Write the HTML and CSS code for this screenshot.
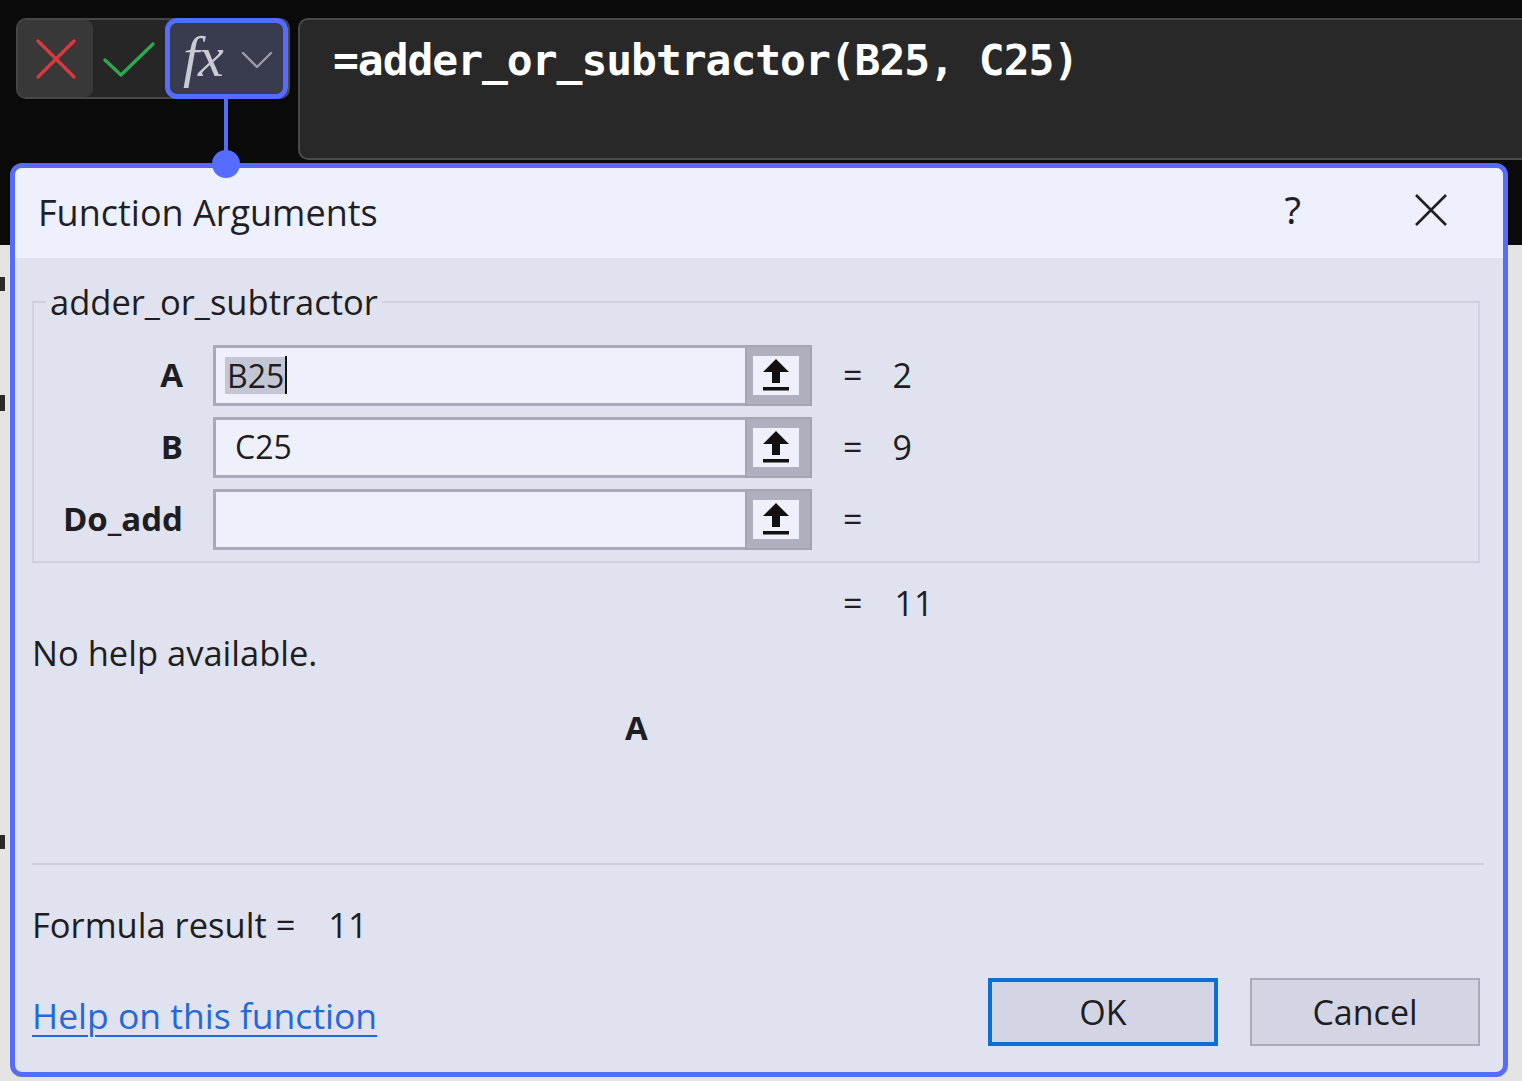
FILE: index.html
```html
<!DOCTYPE html>
<html lang="en">
<head>
<meta charset="utf-8">
<title>Function Arguments</title>
<link rel="stylesheet" href="styles.css">
</head>
<body>
<div class="topbar">
  <div class="toolbar">
    <div class="tb-cancel">
      <svg width="40" height="40" viewBox="0 0 40 40"><path d="M2 2 L38 38 M38 2 L2 38" stroke="#d93a3e" stroke-width="3.2" fill="none" stroke-linecap="round"/></svg>
    </div>
    <div class="tb-enter">
      <svg width="54" height="36" viewBox="0 0 54 36"><path d="M3 19 L19 34 L51 3" stroke="#2ea84c" stroke-width="3.4" fill="none" stroke-linecap="round" stroke-linejoin="round"/></svg>
    </div>
    <div class="tb-fx">
      <span class="fx">fx</span>
      <svg class="chev" width="32" height="18" viewBox="0 0 32 18"><path d="M2 2 L16 16 L30 2" stroke="#9a9ca6" stroke-width="2.4" fill="none" stroke-linecap="round" stroke-linejoin="round"/></svg>
    </div>
  </div>
  <div class="formula">=adder_or_subtractor(B25, C25)</div>
</div>
<div class="sheet">
  <span class="mark mark1"></span>
  <span class="mark mark2"></span>
  <span class="mark mark3"></span>
</div>

<div class="connector"></div>
<div class="dot"></div>

<div class="dialog">
  <div class="titlebar">
    <span class="title">Function Arguments</span>
    <span class="help">?</span>
    <svg class="close" width="32" height="32" viewBox="0 0 32 32"><path d="M1 1 L31 31 M31 1 L1 31" stroke="#1f1f24" stroke-width="2.6" fill="none"/></svg>
  </div>
  <div class="dbody">
    <fieldset class="args">
      <legend>adder_or_subtractor</legend>
      <div class="arg-row">
        <span class="arg-label">A</span>
        <div class="field field-sel"><span class="sel">B25</span><span class="caret"></span></div>
        <div class="ref"><span class="ref-inner"><svg width="28" height="34" viewBox="0 0 28 34"><path d="M14 1 L27 14 L18 14 L18 25 L10 25 L10 14 L1 14 Z" fill="#111"/><rect x="1" y="29" width="26" height="3.5" fill="#111"/></svg></span></div>
        <span class="eq">=</span><span class="val">2</span>
      </div>
      <div class="arg-row">
        <span class="arg-label">B</span>
        <div class="field"><span class="ftext">C25</span></div>
        <div class="ref"><span class="ref-inner"><svg width="28" height="34" viewBox="0 0 28 34"><path d="M14 1 L27 14 L18 14 L18 25 L10 25 L10 14 L1 14 Z" fill="#111"/><rect x="1" y="29" width="26" height="3.5" fill="#111"/></svg></span></div>
        <span class="eq">=</span><span class="val">9</span>
      </div>
      <div class="arg-row">
        <span class="arg-label">Do_add</span>
        <div class="field"></div>
        <div class="ref"><span class="ref-inner"><svg width="28" height="34" viewBox="0 0 28 34"><path d="M14 1 L27 14 L18 14 L18 25 L10 25 L10 14 L1 14 Z" fill="#111"/><rect x="1" y="29" width="26" height="3.5" fill="#111"/></svg></span></div>
        <span class="eq">=</span>
      </div>
    </fieldset>
    <div class="result-row"><span class="eq">=</span><span class="val">11</span></div>
    <p class="nohelp">No help available.</p>
    <p class="argname">A</p>
    <div class="sep"></div>
    <p class="formula-result">Formula result = <span class="fr-val">11</span></p>
    <div class="footer">
      <a class="helplink" href="#">Help on this function</a>
      <div class="buttons">
        <button class="btn btn-ok">OK</button>
        <button class="btn btn-cancel">Cancel</button>
      </div>
    </div>
  </div>
</div>
</body>
</html>
```

FILE: styles.css
```css
html, body {
  margin: 0;
  padding: 0;
}
body {
  width: 1522px;
  height: 1081px;
  overflow: hidden;
  position: relative;
  background: #dadada;
  font-family: "Open Sans", "Noto Sans", sans-serif;
  color: #1d1d22;
}

/* ---------- top bar ---------- */
.topbar {
  height: 245px;
  box-sizing: border-box;
  background: #0a0a0a;
  display: flex;
  align-items: flex-start;
  padding: 18px 0 0 16px;
}
.toolbar {
  width: 274px;
  height: 81px;
  box-sizing: border-box;
  border: 2px solid #474747;
  border-radius: 10px;
  background: #262626;
  display: flex;
  align-items: stretch;
  flex: none;
}
.tb-cancel {
  width: 75px;
  background: #383838;
  border-radius: 8px;
  display: flex;
  align-items: center;
  justify-content: center;
}
.tb-enter {
  width: 72px;
  display: flex;
  align-items: center;
  justify-content: center;
}
.tb-fx {
  width: 123px;
  margin: -2px -2px -2px 0;
  box-sizing: border-box;
  border: 5px solid #556cff;
  border-radius: 12px;
  background: #393c4e;
  display: flex;
  align-items: center;
  padding-left: 13px;
}
.fx {
  font-family: "Liberation Serif", "DejaVu Serif", serif;
  font-style: italic;
  font-size: 58px;
  line-height: 1;
  color: #c9cad2;
  letter-spacing: -1px;
  margin-top: -4px;
}
.chev {
  margin-left: 18px;
  margin-top: 2px;
}
.formula {
  margin-left: 8px;
  margin-right: -30px;
  flex: 1;
  height: 142px;
  box-sizing: border-box;
  border: 2px solid #4a4a4a;
  border-radius: 10px;
  background: #282828;
  color: #ffffff;
  font-family: "DejaVu Sans Mono", "Liberation Mono", monospace;
  font-weight: bold;
  font-size: 43px;
  letter-spacing: -1.05px;
  line-height: 50px;
  padding: 15px 0 0 33px;
}

/* ---------- background sheet ---------- */
.sheet {
  height: 836px;
  background: #e4e4e4;
  position: relative;
}
.mark {
  position: absolute;
  left: 0;
  width: 5px;
  background: #2a2a2a;
}
.mark1 { top: 32px; height: 14px; }
.mark2 { top: 150px; height: 16px; }
.mark3 { top: 590px; height: 14px; }

/* ---------- connector ---------- */
.connector {
  position: absolute;
  left: 224px;
  top: 98px;
  width: 4px;
  height: 66px;
  background: #556cff;
}
.dot {
  position: absolute;
  left: 212px;
  top: 150px;
  width: 28px;
  height: 28px;
  border-radius: 50%;
  background: #556cff;
  z-index: 3;
}

/* ---------- dialog ---------- */
.dialog {
  position: absolute;
  left: 10px;
  top: 163px;
  width: 1498px;
  box-sizing: border-box;
  border: 5px solid #556cff;
  border-radius: 12px;
  background: #e0e2f0;
  overflow: hidden;
  z-index: 2;
}
.titlebar {
  height: 90px;
  background: #eef0fd;
  display: flex;
  align-items: center;
  padding: 0 56px 0 23px;
}
.title {
  font-size: 36px;
  color: #1f1f28;
  margin-top: -2px;
}
.help {
  margin-left: auto;
  font-size: 38px;
  color: #1f1f28;
  font-family: "Noto Sans", "Open Sans", sans-serif;
  margin-top: -8px;
}
.close {
  margin-left: 114px;
  margin-top: -6px;
}

.dbody {
  padding: 0 23px 26px 17px;
  font-size: 34.5px;
  line-height: 40px;
}
.args {
  margin: 24px 0 0 0;
  border: 2px solid #cdd0e0;
  padding: 23px 0 12px 0;
  min-width: 0;
}
.args legend {
  margin-left: 12px;
  padding: 0 4px;
  font-size: 34.5px;
  line-height: 40px;
}
.arg-row {
  display: flex;
  align-items: center;
  height: 60px;
}
.arg-row + .arg-row {
  margin-top: 12px;
}
.arg-label {
  width: 149px;
  margin-right: 30px;
  text-align: right;
  font-weight: bold;
  font-size: 33px;
}
.field {
  width: 532px;
  height: 61px;
  box-sizing: border-box;
  border: 3px solid #a8aab8;
  border-right: none;
  background: #eef0fc;
  display: flex;
  align-items: center;
  padding-left: 19px;
  font-size: 32px;
}
.field-sel {
  padding-left: 9px;
}
.sel {
  background: #c4c6d3;
  padding: 0 1px 0 2px;
  line-height: 37px;
}
.caret {
  width: 2px;
  height: 38px;
  background: #111;
}
.ref {
  width: 67px;
  height: 61px;
  box-sizing: border-box;
  background: #aeb0be;
  border: 2px solid #a3a5b3;
  padding: 9px 11px 9px 6px;
  display: flex;
}
.ref-inner {
  flex: 1;
  background: #eef0fc;
  display: flex;
  align-items: center;
  justify-content: center;
}
.eq {
  margin-left: 31px;
  font-size: 34px;
}
.val {
  margin-left: 30px;
  font-size: 34px;
}
.result-row {
  margin-top: 20px;
  padding-left: 811px;
  display: flex;
}
.result-row .eq {
  margin-left: 0;
}
.result-row .val {
  margin-left: 32px;
}
p {
  margin: 0;
}
.nohelp {
  margin-top: 10px;
}
.argname {
  margin-top: 35px;
  padding-left: 593px;
  font-weight: bold;
  font-size: 33px;
}
.sep {
  margin: 115px -4px 0 0;
  height: 2px;
  background: #cdd0de;
}
.formula-result {
  margin-top: 40px;
}
.fr-val {
  margin-left: 24px;
}
.footer {
  margin-top: 33px;
  height: 68px;
  display: flex;
  align-items: center;
  justify-content: space-between;
}
.helplink {
  font-size: 35.5px;
  color: #2369dc;
  text-decoration: underline;
  text-underline-offset: 6px;
  text-decoration-thickness: 2px;
  margin-top: 6px;
}
.buttons {
  display: flex;
  gap: 32px;
}
.btn {
  width: 230px;
  height: 68px;
  box-sizing: border-box;
  background: #d3d5e5;
  font-family: "Open Sans", "Noto Sans", sans-serif;
  font-size: 34px;
  color: #1d1d22;
  padding: 0;
}
.btn-ok {
  border: 4px solid #0b6fd8;
}
.btn-cancel {
  border: 2px solid #a9abb9;
}
```
